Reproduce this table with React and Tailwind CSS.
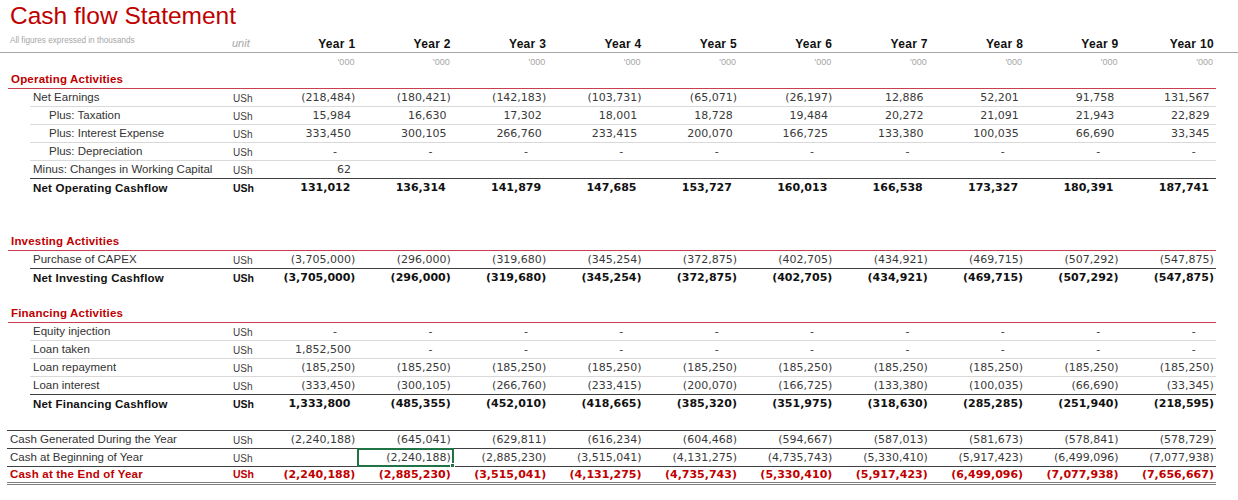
import React from 'react'

const years = [1, 2, 3, 4, 5, 6, 7, 8, 9, 10]
const zeros = Array(10).fill(0)

const data = {
  netEarnings: [-218484, -180421, -142183, -103731, -65071, -26197, 12886, 52201, 91758, 131567],
  taxation: [15984, 16630, 17302, 18001, 18728, 19484, 20272, 21091, 21943, 22829],
  interest: [333450, 300105, 266760, 233415, 200070, 166725, 133380, 100035, 66690, 33345],
  workingCap: [62, null, null, null, null, null, null, null, null, null],
  netOperating: [131012, 136314, 141879, 147685, 153727, 160013, 166538, 173327, 180391, 187741],
  capex: [-3705000, -296000, -319680, -345254, -372875, -402705, -434921, -469715, -507292, -547875],
  loanTaken: [1852500, 0, 0, 0, 0, 0, 0, 0, 0, 0],
  repayment: Array(10).fill(-185250),
  loanInterest: [-333450, -300105, -266760, -233415, -200070, -166725, -133380, -100035, -66690, -33345],
  netFinancing: [1333800, -485355, -452010, -418665, -385320, -351975, -318630, -285285, -251940, -218595],
  generated: [-2240188, -645041, -629811, -616234, -604468, -594667, -587013, -581673, -578841, -578729],
  beginning: [null, -2240188, -2885230, -3515041, -4131275, -4735743, -5330410, -5917423, -6499096, -7077938],
  ending: [-2240188, -2885230, -3515041, -4131275, -4735743, -5330410, -5917423, -6499096, -7077938, -7656667],
}

const LINES = {
  light: 'border-b border-[#d9d9d9]',
  dark: 'border-b border-[#404040]',
  red: 'border-b border-[#c8404f]',
  double: 'border-b-[3px] border-double border-[#7f7f7f]',
  none: '',
}

// row start (x where the line begins) -> [row classes, label width]
const STARTS = {
  30: ['ml-[30px] w-[1186px]', 'w-[185px]'],
  8: ['ml-[8px] w-[1208px]', 'w-[207px]'],
  7: ['ml-[7px] w-[1209px]', 'w-[208px]'],
}

const LABEL = {
  normal: 'text-[11.5px] text-[#333]',
  bold: 'text-[11.5px] font-bold tracking-[0.2px] text-[#111]',
  red: 'text-[11.5px] font-bold tracking-[0.2px] text-[#c00000]',
}

const UNIT = {
  normal: 'text-[10px] text-[#404040]',
  bold: 'text-[10.5px] font-bold text-[#111]',
  red: 'text-[10.5px] font-bold text-[#c00000]',
}

const NUM = {
  normal: 'font-normal text-[#3a3a3a]',
  bold: 'font-bold text-[#111]',
  red: 'font-bold text-[#c00000]',
}

function Num({ v }) {
  if (v === null || v === undefined) return null
  if (v === 0) return <>-<span className="invisible">00)</span></>
  const s = Math.abs(v).toLocaleString('en-US')
  if (v < 0) return <>({s})</>
  return <>{s}<span className="invisible">)</span></>
}

function Row({ start = 30, pad = 'pl-[3px]', label, values, kind = 'normal', line = 'none', selected }) {
  const [rowCls, labelW] = STARTS[start]
  return (
    <div className={`flex h-[18px] items-center pt-[1px] ${rowCls} ${LINES[line]}`}>
      <div className={`${labelW} ${pad} ${LABEL[kind]} whitespace-nowrap`}>{label}</div>
      <div className={`w-[47px] pl-[18px] ${UNIT[kind]}`}>USh</div>
      {values.map((v, i) => (
        <div
          key={i}
          className={`relative w-[95.4px] h-full flex items-center justify-end pr-[2px] whitespace-nowrap font-['DejaVu_Sans',sans-serif] text-[11px] ${NUM[kind]}`}
        >
          <Num v={v} />
          {selected === i && (
            <div className="absolute -top-[2px] -bottom-[1px] left-0 right-[-1px] border-2 border-[#217346]">
              <div className="absolute -right-[3px] -bottom-[3px] w-[5px] h-[5px] bg-[#217346] border border-white" />
            </div>
          )}
        </div>
      ))}
    </div>
  )
}

function Section({ title }) {
  return (
    <div className={`flex h-[18px] items-center pt-[1px] ${STARTS[8][0]} ${LINES.red}`}>
      <div className={`pl-[3px] ${LABEL.red}`}>{title}</div>
    </div>
  )
}

const Spacer = ({ start, line = 'none' }) => (
  <div className={`h-[18px] ${start ? STARTS[start][0] : ''} ${LINES[line]}`} />
)

export default function App() {
  return (
    <div className="w-[1238px] h-[500px] bg-white overflow-hidden font-['Liberation_Sans',Arial,sans-serif]">
      <div className="h-[35px] pl-[10px] pt-[4px]">
        <h1 className="text-[24.5px] leading-none text-[#c00000]">Cash flow Statement</h1>
      </div>

      {/* header */}
      <div className="flex h-[18px] border-b border-[#a6a6a6]">
        <div className="w-[215px] pl-[10px] pt-[1px] text-[8.2px] leading-[10px] text-[#a6a6a6]">All figures expressed in thousands</div>
        <div className="w-[47px] pl-[17px] flex items-center text-[11px] italic text-[#a6a6a6]">unit</div>
        {years.map((y) => (
          <div key={y} className="w-[95.4px] flex items-center justify-end pr-[2px] text-[12px] font-bold tracking-[0.3px] text-[#111]">
            Year {y}
          </div>
        ))}
      </div>
      <div className="flex h-[18px] items-center pt-[1px]">
        <div className="w-[262px]" />
        {years.map((y) => (
          <div key={y} className="w-[95.4px] text-right pr-[3px] text-[9px] text-[#a6a6a6]">'000</div>
        ))}
      </div>

      <Section title="Operating Activities" />
      <Row label="Net Earnings" values={data.netEarnings} line="light" />
      <Row label="Plus: Taxation" pad="pl-[19px]" values={data.taxation} line="light" />
      <Row label="Plus: Interest Expense" pad="pl-[19px]" values={data.interest} line="light" />
      <Row label="Plus: Depreciation" pad="pl-[19px]" values={zeros} line="light" />
      <Row label="Minus: Changes in Working Capital" values={data.workingCap} line="dark" />
      <Row label="Net Operating Cashflow" kind="bold" values={data.netOperating} />
      <Spacer />
      <Spacer />

      <Section title="Investing Activities" />
      <Row label="Purchase of CAPEX" values={data.capex} line="dark" />
      <Row label="Net Investing Cashflow" kind="bold" values={data.capex} />
      <Spacer />

      <Section title="Financing Activities" />
      <Row label="Equity injection" values={zeros} line="light" />
      <Row label="Loan taken" values={data.loanTaken} line="light" />
      <Row label="Loan repayment" values={data.repayment} line="light" />
      <Row label="Loan interest" values={data.loanInterest} line="dark" />
      <Row label="Net Financing Cashflow" kind="bold" values={data.netFinancing} />
      <Spacer start={7} line="dark" />

      <Row start={7} label="Cash Generated During the Year" values={data.generated} line="dark" />
      <Row start={7} label="Cash at Beginning of Year" values={data.beginning} line="dark" selected={1} />
      <Row start={7} label="Cash at the End of Year" kind="red" values={data.ending} line="double" />
    </div>
  )
}
